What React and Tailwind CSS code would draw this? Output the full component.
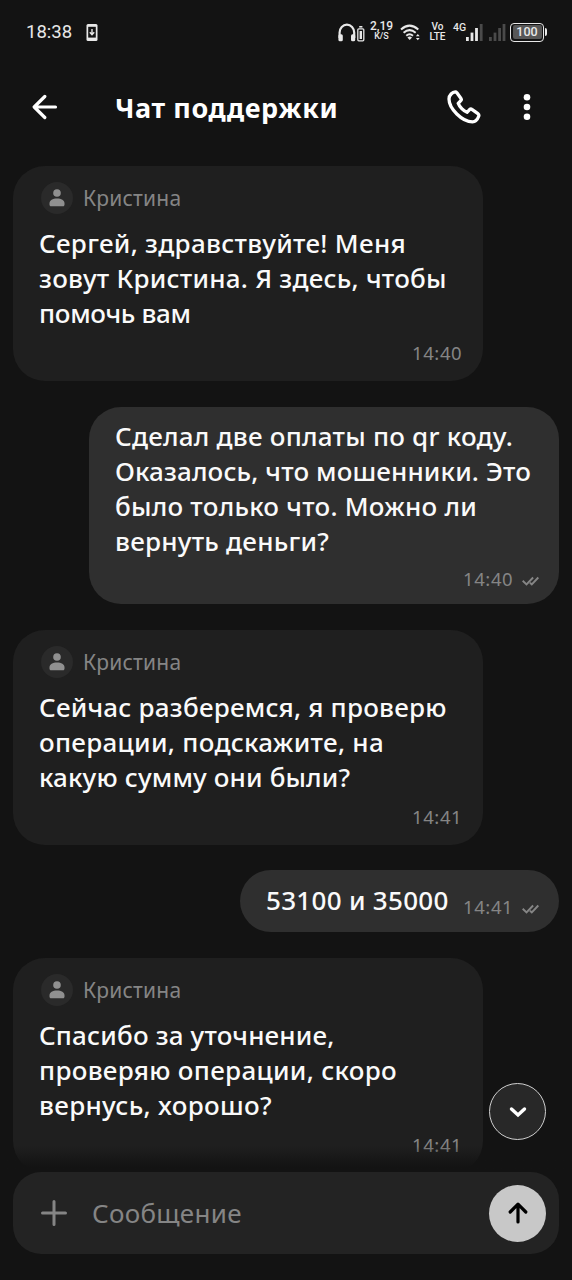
const MESSAGES = [
  {
    id: 1,
    author: 'Кристина',
    time: '14:40',
    lines: [
      { text: 'Сергей, здравствуйте! Меня', tracking: 'tracking-[0.3px]' },
      { text: 'зовут Кристина. Я здесь, чтобы', tracking: 'tracking-[0.24px]' },
      { text: 'помочь вам', tracking: 'tracking-[-0.3px]' },
    ],
  },
  {
    id: 2,
    time: '14:40',
    lines: [
      { text: 'Сделал две оплаты по qr коду.', tracking: 'tracking-[0.24px]' },
      { text: 'Оказалось, что мошенники. Это', tracking: 'tracking-[0.13px]' },
      { text: 'было только что. Можно ли', tracking: 'tracking-[0.24px]' },
      { text: 'вернуть деньги?', tracking: 'tracking-[0.24px]' },
    ],
  },
  {
    id: 3,
    author: 'Кристина',
    time: '14:41',
    lines: [
      { text: 'Сейчас разберемся, я проверю', tracking: 'tracking-[0.22px]' },
      { text: 'операции, подскажите, на', tracking: 'tracking-[0.3px]' },
      { text: 'какую сумму они были?', tracking: 'tracking-[0.15px]' },
    ],
  },
  {
    id: 4,
    time: '14:41',
    compact: true,
    lines: [{ text: '53100 и 35000', tracking: 'tracking-[0.3px]' }],
  },
  {
    id: 5,
    author: 'Кристина',
    time: '14:41',
    lines: [
      { text: 'Спасибо за уточнение,', tracking: 'tracking-[0.17px]' },
      { text: 'проверяю операции, скоро', tracking: 'tracking-[0.3px]' },
      { text: 'вернусь, хорошо?', tracking: 'tracking-[0.33px]' },
    ],
  },
]

function StatusBar() {
  return (
    <div className="h-16 shrink-0 flex items-center pl-[26px] pr-[25px] text-[#e8e8e8] font-['Roboto',sans-serif]">
      <span className="w-[47px] text-[18.5px] leading-none whitespace-nowrap">18:38</span>
      <svg className="ml-[13px]" width="12" height="17" viewBox="0 0 12 17">
        <rect x="0.5" width="11" height="17" rx="1.5" fill="#e8e8e8" />
        <rect x="2.2" y="2.8" width="7.6" height="10.8" fill="#131313" />
        <path d="M6 5v5M3.8 8.3 6 10.7l2.2-2.4" fill="none" stroke="#e8e8e8" strokeWidth="1.4" />
      </svg>

      <div className="ml-auto flex items-center">
        {/* Headphones with battery */}
        <svg width="27" height="19" viewBox="0 0 27 19">
          <path d="M1.6 15V9.6a7.2 7.8 0 0 1 14.6 0V15" fill="none" stroke="#e8e8e8" strokeWidth="2.2" />
          <rect x="0.4" y="11.2" width="4.4" height="7" rx="1.5" fill="#e8e8e8" />
          <rect x="13" y="11.2" width="4.2" height="7" rx="1.5" fill="#e8e8e8" />
          <rect x="19.8" y="5.8" width="6" height="12" rx="1" fill="none" stroke="#e8e8e8" strokeWidth="1.3" />
          <path d="M21.2 3.8h3.2" stroke="#e8e8e8" strokeWidth="1.6" />
          <rect x="21.6" y="8" width="2.4" height="8" fill="#e8e8e8" />
        </svg>
        <div className="ml-[5px] w-[23px] flex flex-col items-center -mt-[3px] font-medium whitespace-nowrap">
          <span className="text-[12px] leading-[11px]">2,19</span>
          <span className="text-[9px] leading-[9px]">K/S</span>
        </div>
        <svg className="ml-[7px]" width="21" height="17" viewBox="0 0 21 17">
          <g fill="none" stroke="#e8e8e8" strokeWidth="2">
            <path d="M1 5.4Q9.5-2.2 18.3 5.4" />
            <path d="M3.6 8.7Q9.5 3.5 15.7 8.7" />
            <path d="M6.3 11.7Q9.5 8.9 13 11.7" />
          </g>
          <path d="m7.4 13.4 2.3 2.6 2.3-2.6Q9.7 11.8 7.4 13.4Z" fill="#e8e8e8" />
          <path d="M15.9 12.3 17.8 10l1.9 2.3ZM15.9 14l1.9 2.3 1.9-2.3Z" fill="#e8e8e8" />
        </svg>
        <div className="ml-[8px] w-[17px] flex flex-col items-center font-medium">
          <span className="text-[10px] leading-[10px]">Vo</span>
          <span className="text-[10px] leading-[10px]">LTE</span>
        </div>
        <span className="ml-[7px] -mt-2 w-[13px] text-[10.5px] leading-none font-medium">4G</span>
        <svg width="42" height="18" viewBox="0 0 42 18">
          <g fill="#e8e8e8">
            <rect x="0" y="14" width="2.8" height="4" />
            <rect x="4.6" y="9.6" width="2.8" height="8.4" />
            <rect x="9.1" y="5" width="2.8" height="13" />
          </g>
          <g fill="#4a4a4a">
            <rect x="13.8" y="1" width="2.8" height="17" />
            <rect x="23" y="14" width="2.8" height="4" />
            <rect x="27.6" y="9.6" width="2.8" height="8.4" />
            <rect x="32.2" y="5" width="2.8" height="13" />
            <rect x="36.6" y="1" width="2.8" height="17" />
          </g>
        </svg>
        <div className="ml-[2px] w-[34px] h-[19px] rounded-[4px] border-[1.5px] border-[#e8e8e8] p-[1.5px]">
          <div className="h-full rounded-[2px] bg-[#575757] flex items-center justify-center text-[12.5px] leading-none font-medium">
            100
          </div>
        </div>
        <div className="ml-[1px] w-[2px] h-2 rounded-r-sm bg-[#e8e8e8]" />
      </div>
    </div>
  )
}

function Header() {
  return (
    <header className="h-[86px] shrink-0 flex items-center pl-8 pr-[41px] text-white">
      <svg width="26" height="26" viewBox="0 0 26 26" fill="none" stroke="currentColor" strokeWidth="3.2" strokeLinecap="round" strokeLinejoin="round">
        <path d="M23.5 13H2.5M12.8 2.5 2.2 13l10.6 10.5" />
      </svg>
      <h1 className="ml-[57px] text-[27px] leading-none font-bold whitespace-nowrap tracking-[0.6px]">Чат поддержки</h1>
      <svg className="ml-auto" width="34" height="34" viewBox="0 0 34 34" fill="none" stroke="currentColor" strokeWidth="3.3" strokeLinejoin="round">
        <path d="M2 9C2 5 5.500 2 8.300 1.900c.7 0 1.100.3 1.600.9L14 8.500c.5.8.4 1.500-.2 2.100L11.200 13.300C12.500 17 16.500 21 20 22.300l2.600-2.700c.8-.7 1.500-.8 2.300-.2l6 4.200c1.100.8 1.200 1.600.8 2.700-1.200 3.200-3.200 5.500-6.200 5.500C15 31.800 2 18.500 2 9Z" />
      </svg>
      <svg className="ml-[42px]" width="8" height="26" viewBox="0 0 8 26" fill="currentColor">
        <circle cx="4" cy="3.3" r="3.3" />
        <circle cx="4" cy="13" r="3.3" />
        <circle cx="4" cy="22.7" r="3.3" />
      </svg>
    </header>
  )
}

function Time({ value, read }) {
  return (
    <div className="flex items-center text-[18.5px] leading-none text-[#858585]">
      <span className="w-[51px] whitespace-nowrap tracking-[0.6px]">{value}</span>
      {read && (
        <svg className="ml-2 mt-1" width="17" height="10" viewBox="0 0 17 10" fill="none" stroke="currentColor" strokeWidth="1.9">
          <path d="m.7 4.8 3.8 3.7 6.6-7M8 6.8l1.8 1.7 6.5-7" />
        </svg>
      )}
    </div>
  )
}

function Lines({ lines }) {
  return (
    <div className="text-[26px] leading-[35px] font-medium text-[#fafafa] whitespace-nowrap">
      {lines.map((line) => (
        <div key={line.text} className={line.tracking}>{line.text}</div>
      ))}
    </div>
  )
}

function Incoming({ message }) {
  return (
    <div className="self-start w-[470px] h-[215px] shrink-0 rounded-[32px] bg-[#1f1f1f] pl-[26px] pr-5 pt-4">
      <div className="flex items-center pl-[2px]">
        <div className="size-8 rounded-full bg-[#2a2a2a] flex items-center justify-center">
          <svg width="16" height="18" viewBox="0 0 16 18" fill="#909090">
            <circle cx="8" cy="4" r="3.8" />
            <path d="M.5 14.5c0-3.4 3.2-5 7.5-5s7.5 1.6 7.5 5v1.2c0 .9-.6 1.5-1.5 1.5H2c-.9 0-1.5-.6-1.5-1.5Z" />
          </svg>
        </div>
        <span className="ml-[10px] text-[21px] leading-8 tracking-[0.2px] text-[#858585]">{message.author}</span>
      </div>
      <div className="mt-[12px]">
        <Lines lines={message.lines} />
      </div>
      <div className="mt-[13px] flex justify-end">
        <Time value={message.time} />
      </div>
    </div>
  )
}

function Outgoing({ message }) {
  if (message.compact) {
    return (
      <div className="self-end w-[319px] h-[62px] shrink-0 rounded-[31px] bg-[#2f2f2f] pl-[26px] pr-5 flex items-center justify-between">
        <div className="pb-px">
          <Lines lines={message.lines} />
        </div>
        <div className="mt-[12px]">
          <Time value={message.time} read />
        </div>
      </div>
    )
  }
  return (
    <div className="self-end w-[470px] h-[197px] shrink-0 rounded-[32px] bg-[#2f2f2f] pl-[26px] pr-5 pt-3">
      <Lines lines={message.lines} />
      <div className="mt-[11px] flex justify-end">
        <Time value={message.time} read />
      </div>
    </div>
  )
}

function Composer() {
  return (
    <div className="mx-[13px] mb-[26px] h-[82px] shrink-0 rounded-[28px] bg-[#232323] pl-7 pr-[13px] flex items-center text-[#858585]">
      <svg width="26" height="26" viewBox="0 0 26 26" fill="none" stroke="currentColor" strokeWidth="3" strokeLinecap="round">
        <path d="M13 1.5v23M1.5 13h23" />
      </svg>
      <span className="ml-[25px] text-[26px] leading-none tracking-[0.3px]">Сообщение</span>
      <button className="ml-auto size-[57px] rounded-full bg-[#c8c8c8] flex items-center justify-center text-black">
        <svg width="20" height="22" viewBox="0 0 20 22" fill="none" stroke="currentColor" strokeWidth="3.2" strokeLinecap="round" strokeLinejoin="round">
          <path d="M10 20V2.5M2.200 10 10 2.200 17.800 10" />
        </svg>
      </button>
    </div>
  )
}

export default function App() {
  return (
    <div className="w-[572px] h-[1280px] overflow-hidden bg-[#131313] flex flex-col font-['Noto_Sans',sans-serif]">
      <StatusBar />
      <Header />

      <div className="relative flex-1 min-h-0 overflow-hidden px-[13px] pt-4">
        <div className="flex flex-col gap-[25.75px]">
          {MESSAGES.map((message) =>
            message.author
              ? <Incoming key={message.id} message={message} />
              : <Outgoing key={message.id} message={message} />
          )}
        </div>

        <div className="absolute inset-x-0 bottom-0 h-[26px] bg-linear-to-t from-[#131313] from-20% to-transparent" />
        {/* Scroll to bottom */}
        <button className="absolute right-[26px] bottom-[32px] size-[57px] rounded-full bg-[#282828] border-[1.5px] border-[#cfcfcf] flex items-center justify-center text-white">
          <svg width="18" height="12" viewBox="0 0 18 12" fill="none" stroke="currentColor" strokeWidth="3.4" strokeLinecap="round">
            <path d="m2.5 3 6.5 6 6.5-6" />
          </svg>
        </button>
      </div>

      <Composer />
    </div>
  )
}
